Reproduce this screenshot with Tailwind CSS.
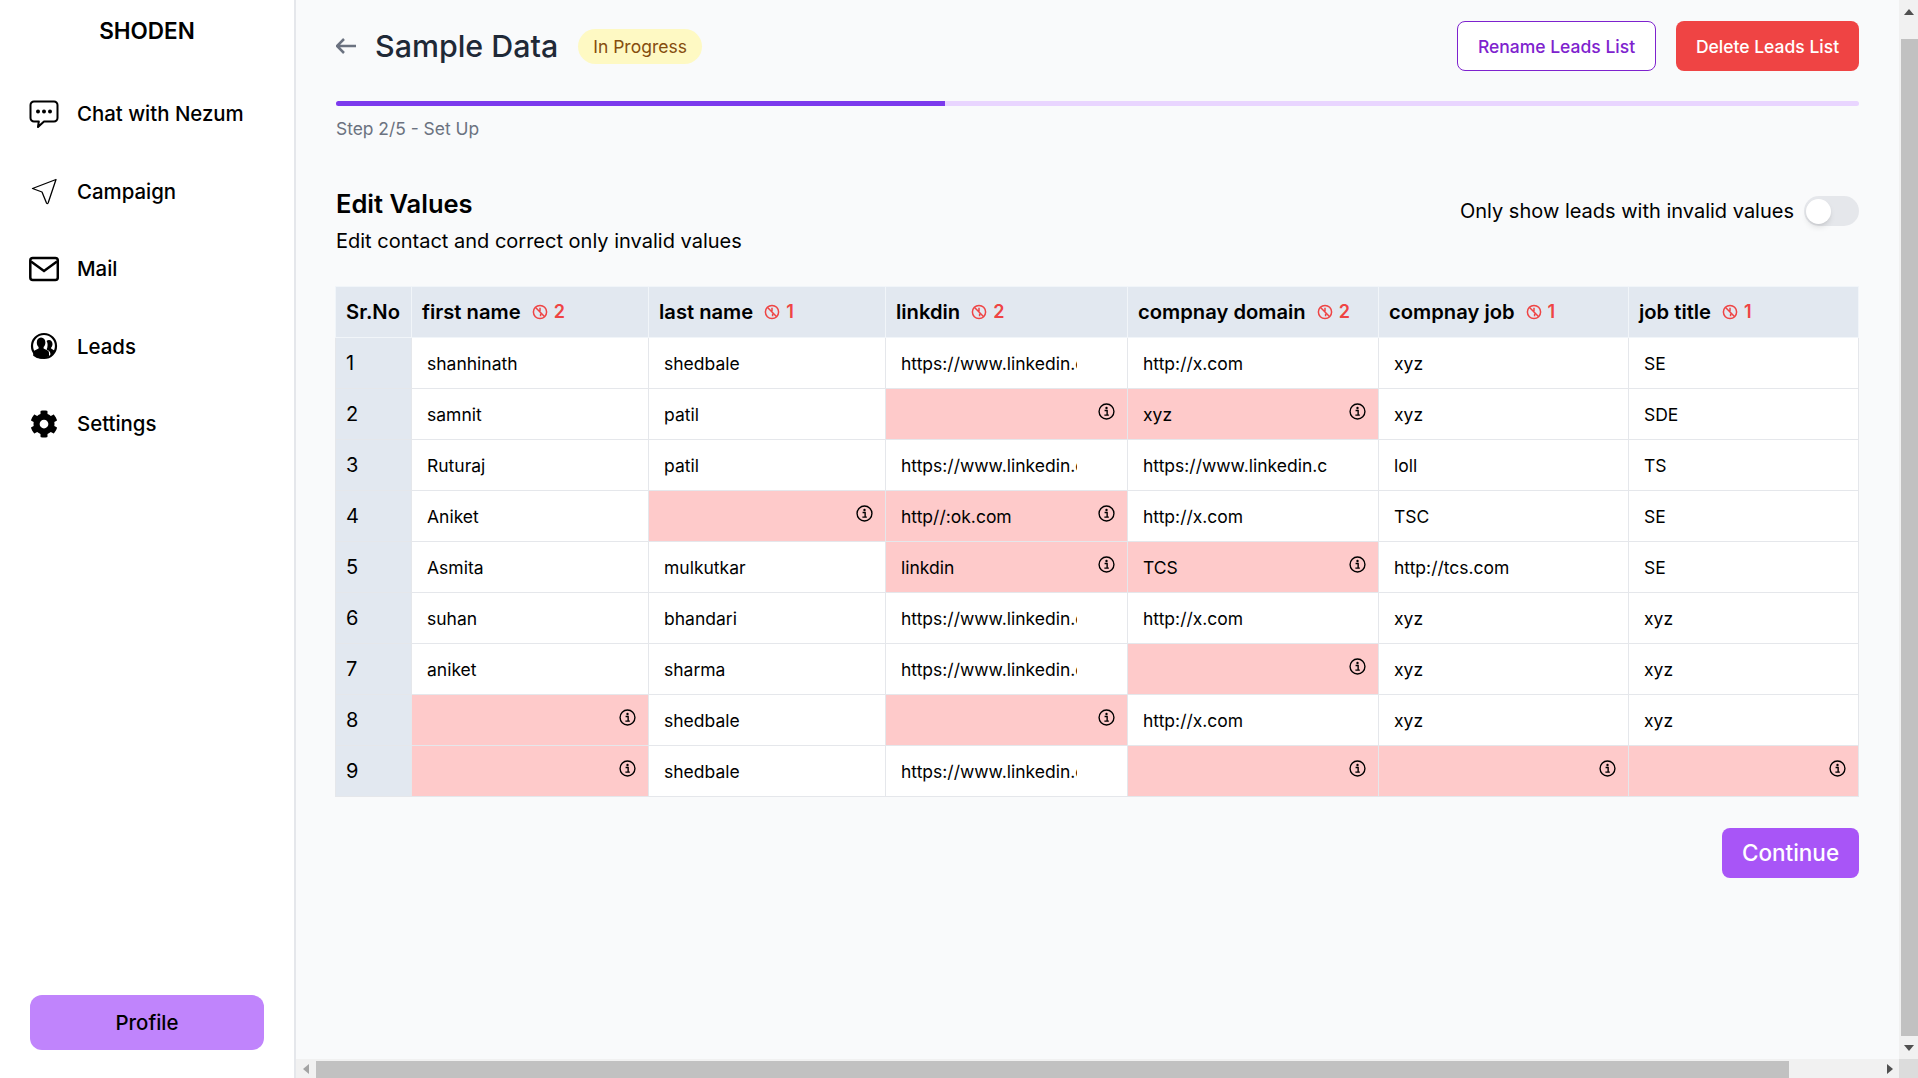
<!DOCTYPE html>
<html lang="en">
<head>
    <meta charset="UTF-8">
    <meta name="viewport" content="width=device-width, initial-scale=1.0">
    <title>Sample Data</title>
    <script src="https://cdn.jsdelivr.net/npm/@tailwindcss/browser@4"></script>
</head>
<body class="h-screen overflow-hidden font-['Inter',sans-serif] text-black bg-white">
    <!-- shared icons -->
    <svg class="hidden">
        <symbol id="info" viewBox="0 0 16 16">
            <circle cx="8" cy="8" r="7" fill="none" stroke="currentColor" stroke-width="1.3"></circle>
            <circle cx="8" cy="4.7" r="1.1" fill="currentColor"></circle>
            <path d="M6.2 7.100h2.400v4.200M6 11.400h4.200" fill="none" stroke="currentColor" stroke-width="1.3"></path>
        </symbol>
        <symbol id="ban" viewBox="0 0 16 16">
            <circle cx="8" cy="8" r="6.600" fill="none" stroke="currentColor" stroke-width="1.500"></circle>
            <path d="M3.300 3.300l9.400 9.400M8 3.800v3.400M8.600 9.800v2.400" fill="none" stroke="currentColor" stroke-width="1.500"></path>
        </symbol>
    </svg>

    <div class="flex h-full">
        <!-- sidebar -->
        <aside class="flex flex-col w-[296px] shrink-0 border-r-2 border-[#e5e7eb] bg-white">
            <div class="h-[62px] flex items-center justify-center text-[22.5px] font-semibold">SHODEN</div>
            <nav class="mt-[13px] text-[20.4px] font-medium">
                <a href="#" class="flex items-center h-[77.5px] pl-[29px] gap-[18px]">
                    <svg class="w-[30px] h-[28px]" viewBox="0 0 30 28" fill="none">
                        <path d="M5 1.500h20a3.500 3.500 0 0 1 3.500 3.500v13a3.500 3.500 0 0 1-3.500 3.500H15l-6 5.500 .8-5.500H5a3.500 3.500 0 0 1-3.500-3.500V5A3.500 3.500 0 0 1 5 1.500z" stroke="#000" stroke-width="2" stroke-linejoin="round"></path>
                        <circle cx="9" cy="11.500" r="2" fill="#000"></circle>
                        <circle cx="15" cy="11.500" r="2" fill="#000"></circle>
                        <circle cx="21" cy="11.500" r="2" fill="#000"></circle>
                    </svg>
                    <span class="pt-[2px]">Chat with Nezum</span>
                </a>
                <a href="#" class="flex items-center h-[77.5px] pl-[29px] gap-[18px]">
                    <svg class="w-[30px] h-[28px]" viewBox="0 0 30 28" fill="none">
                        <path d="M27 2.500L3.500 11.500l9.500 3.500 4.500 11c.6 1 1.300 .8 1.700 -.2z" stroke="#000" stroke-width="1.300" stroke-linejoin="round"></path>
                    </svg>
                    <span class="pt-[2px]">Campaign</span>
                </a>
                <a href="#" class="flex items-center h-[77.5px] pl-[29px] gap-[18px]">
                    <svg class="w-[30px] h-[28px]" viewBox="0 0 30 28" fill="none">
                        <rect x="1.300" y="3" width="27.500" height="22" rx="2.500" stroke="#000" stroke-width="2.500"></rect>
                        <path d="M2 6.500l13 9.500 13-9.500" stroke="#000" stroke-width="2.500"></path>
                    </svg>
                    <span class="pt-[2px]">Mail</span>
                </a>
                <a href="#" class="flex items-center h-[77.5px] pl-[29px] gap-[18px]">
                    <svg class="w-[30px] h-[28px]" viewBox="0 0 30 28">
                        <circle cx="15" cy="14" r="12" fill="#fff" stroke="#000" stroke-width="2.200"></circle>
                        <path d="M12 5.500c2.800 0 4.400 2.200 4.400 5 0 2-.8 3.600-1.800 4.600v1.400l4 2c1 .6 1.400 1.500 1.400 2.700v2.800a12 12 0 0 1-15.800-.2v-2.600c0-1.200.4-2.100 1.400-2.700l4-2v-1.400c-1-1-1.800-2.600-1.800-4.600 0-2.800 1.600-5 4.200-5z" fill="#000"></path>
                        <path d="M20 8c2.200 0 3.500 1.800 3.500 4 0 1.600-.6 2.800-1.400 3.600v1l2.800 1.600c.6 .4 1 1 1 1.800a12 12 0 0 1-4.500 4.500v-2.500c0-1.600-.7-2.800-2-3.600l-1.800-1c.6-1.200 1-2.700 1-4.400 0-1.600-.4-3-1.100-4A3.600 3.600 0 0 1 20 8z" fill="#000"></path>
                    </svg>
                    <span class="pt-[2px]">Leads</span>
                </a>
                <a href="#" class="flex items-center h-[77.5px] pl-[29px] gap-[18px]">
                    <svg class="w-[30px] h-[28px]" viewBox="0 0 512 512">
                        <path fill="#000" d="M487.4 315.7l-42.6-24.6c4.300-23.200 4.300-47 0-70.200l42.600-24.600c4.900-2.800 7.100-8.600 5.500-14-11.100-35.600-30-67.800-54.700-94.600-3.800-4.100-10-5.100-14.800-2.300L380.800 110c-17.900-15.400-38.500-27.300-60.800-35.100V25.800c0-5.600-3.900-10.500-9.400-11.700-36.700-8.200-74.300-7.800-109.200 0-5.500 1.200-9.400 6.100-9.400 11.700V75c-22.200 7.900-42.800 19.800-60.800 35.100L88.700 85.500c-4.900-2.800-11-1.900-14.800 2.300-24.700 26.700-43.600 58.900-54.700 94.600-1.700 5.400.6 11.200 5.500 14L67.300 221c-4.300 23.200-4.300 47 0 70.200l-42.600 24.600c-4.900 2.800-7.100 8.600-5.500 14 11.100 35.600 30 67.800 54.700 94.600 3.800 4.100 10 5.100 14.800 2.300l42.600-24.600c17.900 15.400 38.500 27.300 60.800 35.100v49.200c0 5.600 3.900 10.500 9.400 11.700 36.700 8.200 74.300 7.800 109.200 0 5.500-1.200 9.400-6.100 9.400-11.700v-49.200c22.200-7.900 42.800-19.800 60.800-35.100l42.600 24.600c4.900 2.800 11 1.900 14.800-2.300 24.700-26.700 43.600-58.900 54.700-94.600 1.500-5.500-.7-11.300-5.600-14.100zM256 336c-44.100 0-80-35.900-80-80s35.900-80 80-80 80 35.900 80 80-35.900 80-80 80z"></path>
                    </svg>
                    <span class="pt-[2px]">Settings</span>
                </a>
            </nav>
            <button class="mt-auto mb-[28px] mx-[30px] h-[55px] pt-[2px] rounded-xl bg-[#c084fc] text-[20.4px] font-medium">Profile</button>
        </aside>

        <div class="flex-1 min-w-0 flex flex-col">
            <div class="flex-1 min-h-0 flex">
                <!-- main content -->
                <main class="flex-1 min-w-0 bg-[#f9fafb] pt-[21px] px-[40px]">
                    <div class="flex items-center h-[50px]">
                        <svg class="w-[22px] h-[18px] text-[#6b7280]" viewBox="0 0 22 18" fill="none" stroke="currentColor" stroke-width="2.500">
                            <path d="M20 9H1M8 2L1 9l7 7"></path>
                        </svg>
                        <h1 class="ml-[17px] pt-[2px] text-[30.4px] font-medium text-[#1f2937]">Sample Data</h1>
                        <span class="ml-[20px] h-[35px] px-[15px] pt-[2px] flex items-center rounded-full bg-[#fef9c3] text-[#854d0e] text-[17.5px]">In Progress</span>
                        <button class="ml-auto h-[50px] w-[199px] pt-[2px] rounded-lg border border-[#7e22ce] bg-white text-[#7e22ce] text-[17.5px] font-medium">Rename Leads List</button>
                        <button class="ml-[20px] h-[50px] w-[183px] pt-[2px] rounded-lg bg-[#ef4444] text-white text-[17.5px] font-medium">Delete Leads List</button>
                    </div>

                    <div class="mt-[30px] h-[5px] rounded-full bg-[#e9d5ff] overflow-hidden">
                        <div class="h-full w-[40%] bg-[#7c3aed]"></div>
                    </div>
                    <p class="mt-[9px] h-7 leading-7 text-[17.4px] text-[#6b7280]">Step 2/5 - Set Up</p>

                    <div class="mt-[45px] flex justify-between items-start">
                        <div>
                            <h2 class="h-8 leading-8 text-[25.5px] font-semibold">Edit Values</h2>
                            <p class="mt-[7px] h-7 leading-7 text-[20px]">Edit contact and correct only invalid values</p>
                        </div>
                        <label class="pt-[8px] flex items-center gap-[10px] text-[20px]">
                            <span>Only show leads with invalid values</span>
                            <span class="relative w-[55px] h-[30px] rounded-full bg-[#e5e7eb]">
                                <span class="absolute left-[2px] top-[3px] w-[25px] h-[25px] rounded-full bg-white shadow-md"></span>
                            </span>
                        </label>
                    </div>

                    <table class="mt-[31px] -ml-px w-full table-fixed border-collapse text-[17.5px]">
                        <colgroup>
                            <col class="w-[76px]"><col class="w-[237px]"><col class="w-[237px]"><col class="w-[242px]"><col class="w-[251px]"><col class="w-[250px]"><col class="w-[230px]">
                        </colgroup>
                        <thead>
                            <tr class="h-[51px] bg-[#e2e8f0] text-[20.2px] font-semibold text-left">
                                <th class="border border-[#f1f5f9] px-[10px] font-semibold">Sr.No</th>
                                <th class="border border-[#f1f5f9] px-[10px] font-semibold"><span class="flex items-center">first name<svg class="ml-[11px] w-4 h-4 text-[#ef4444]"><use href="#ban"></use></svg><span class="ml-[6px] text-[18px] font-semibold text-[#ef4444]">2</span></span></th>
                                <th class="border border-[#f1f5f9] px-[10px] font-semibold"><span class="flex items-center">last name<svg class="ml-[11px] w-4 h-4 text-[#ef4444]"><use href="#ban"></use></svg><span class="ml-[6px] text-[18px] font-semibold text-[#ef4444]">1</span></span></th>
                                <th class="border border-[#f1f5f9] px-[10px] font-semibold"><span class="flex items-center">linkdin<svg class="ml-[11px] w-4 h-4 text-[#ef4444]"><use href="#ban"></use></svg><span class="ml-[6px] text-[18px] font-semibold text-[#ef4444]">2</span></span></th>
                                <th class="border border-[#f1f5f9] px-[10px] font-semibold"><span class="flex items-center">compnay domain<svg class="ml-[11px] w-4 h-4 text-[#ef4444]"><use href="#ban"></use></svg><span class="ml-[6px] text-[18px] font-semibold text-[#ef4444]">2</span></span></th>
                                <th class="border border-[#f1f5f9] px-[10px] font-semibold"><span class="flex items-center">compnay job<svg class="ml-[11px] w-4 h-4 text-[#ef4444]"><use href="#ban"></use></svg><span class="ml-[6px] text-[18px] font-semibold text-[#ef4444]">1</span></span></th>
                                <th class="border border-[#f1f5f9] px-[10px] font-semibold"><span class="flex items-center">job title<svg class="ml-[11px] w-4 h-4 text-[#ef4444]"><use href="#ban"></use></svg><span class="ml-[6px] text-[18px] font-semibold text-[#ef4444]">1</span></span></th>
                            </tr>
                        </thead>
                        <tbody class="[&_td:not(:first-child)]:pt-[2px]">
                            <tr class="h-[51px] bg-white">
                                <td class="border border-[#e5e7eb] bg-[#e2e8f0] px-[10px] text-[20px]">1</td>
                                <td class="border border-[#e5e7eb] pl-[15px]">shanhinath</td>
                                <td class="border border-[#e5e7eb] pl-[15px]">shedbale</td>
                                <td class="border border-[#e5e7eb] pl-[15px]"><div class="overflow-hidden whitespace-nowrap w-[176px]">https://www.linkedin.c</div></td>
                                <td class="border border-[#e5e7eb] pl-[15px]">http://x.com</td>
                                <td class="border border-[#e5e7eb] pl-[15px]">xyz</td>
                                <td class="border border-[#e5e7eb] pl-[15px]">SE</td>
                            </tr>
                            <tr class="h-[51px] bg-white">
                                <td class="border border-[#e5e7eb] bg-[#e2e8f0] px-[10px] text-[20px]">2</td>
                                <td class="border border-[#e5e7eb] pl-[15px]">samnit</td>
                                <td class="border border-[#e5e7eb] pl-[15px]">patil</td>
                                <td class="relative border border-[#e5e7eb] pl-[15px] bg-[#fecaca]"><svg class="absolute right-[12px] top-[14px] w-[17px] h-[17px]"><use href="#info"></use></svg></td>
                                <td class="relative border border-[#e5e7eb] pl-[15px] bg-[#fecaca]">xyz<svg class="absolute right-[12px] top-[14px] w-[17px] h-[17px]"><use href="#info"></use></svg></td>
                                <td class="border border-[#e5e7eb] pl-[15px]">xyz</td>
                                <td class="border border-[#e5e7eb] pl-[15px]">SDE</td>
                            </tr>
                            <tr class="h-[51px] bg-white">
                                <td class="border border-[#e5e7eb] bg-[#e2e8f0] px-[10px] text-[20px]">3</td>
                                <td class="border border-[#e5e7eb] pl-[15px]">Ruturaj</td>
                                <td class="border border-[#e5e7eb] pl-[15px]">patil</td>
                                <td class="border border-[#e5e7eb] pl-[15px]"><div class="overflow-hidden whitespace-nowrap w-[176px]">https://www.linkedin.c</div></td>
                                <td class="border border-[#e5e7eb] pl-[15px]"><div class="overflow-hidden whitespace-nowrap w-[185px]">https://www.linkedin.c</div></td>
                                <td class="border border-[#e5e7eb] pl-[15px]">loll</td>
                                <td class="border border-[#e5e7eb] pl-[15px]">TS</td>
                            </tr>
                            <tr class="h-[51px] bg-white">
                                <td class="border border-[#e5e7eb] bg-[#e2e8f0] px-[10px] text-[20px]">4</td>
                                <td class="border border-[#e5e7eb] pl-[15px]">Aniket</td>
                                <td class="relative border border-[#e5e7eb] pl-[15px] bg-[#fecaca]"><svg class="absolute right-[12px] top-[14px] w-[17px] h-[17px]"><use href="#info"></use></svg></td>
                                <td class="relative border border-[#e5e7eb] pl-[15px] bg-[#fecaca]">http//:ok.com<svg class="absolute right-[12px] top-[14px] w-[17px] h-[17px]"><use href="#info"></use></svg></td>
                                <td class="border border-[#e5e7eb] pl-[15px]">http://x.com</td>
                                <td class="border border-[#e5e7eb] pl-[15px]">TSC</td>
                                <td class="border border-[#e5e7eb] pl-[15px]">SE</td>
                            </tr>
                            <tr class="h-[51px] bg-white">
                                <td class="border border-[#e5e7eb] bg-[#e2e8f0] px-[10px] text-[20px]">5</td>
                                <td class="border border-[#e5e7eb] pl-[15px]">Asmita</td>
                                <td class="border border-[#e5e7eb] pl-[15px]">mulkutkar</td>
                                <td class="relative border border-[#e5e7eb] pl-[15px] bg-[#fecaca]">linkdin<svg class="absolute right-[12px] top-[14px] w-[17px] h-[17px]"><use href="#info"></use></svg></td>
                                <td class="relative border border-[#e5e7eb] pl-[15px] bg-[#fecaca]">TCS<svg class="absolute right-[12px] top-[14px] w-[17px] h-[17px]"><use href="#info"></use></svg></td>
                                <td class="border border-[#e5e7eb] pl-[15px]">http://tcs.com</td>
                                <td class="border border-[#e5e7eb] pl-[15px]">SE</td>
                            </tr>
                            <tr class="h-[51px] bg-white">
                                <td class="border border-[#e5e7eb] bg-[#e2e8f0] px-[10px] text-[20px]">6</td>
                                <td class="border border-[#e5e7eb] pl-[15px]">suhan</td>
                                <td class="border border-[#e5e7eb] pl-[15px]">bhandari</td>
                                <td class="border border-[#e5e7eb] pl-[15px]"><div class="overflow-hidden whitespace-nowrap w-[176px]">https://www.linkedin.c</div></td>
                                <td class="border border-[#e5e7eb] pl-[15px]">http://x.com</td>
                                <td class="border border-[#e5e7eb] pl-[15px]">xyz</td>
                                <td class="border border-[#e5e7eb] pl-[15px]">xyz</td>
                            </tr>
                            <tr class="h-[51px] bg-white">
                                <td class="border border-[#e5e7eb] bg-[#e2e8f0] px-[10px] text-[20px]">7</td>
                                <td class="border border-[#e5e7eb] pl-[15px]">aniket</td>
                                <td class="border border-[#e5e7eb] pl-[15px]">sharma</td>
                                <td class="border border-[#e5e7eb] pl-[15px]"><div class="overflow-hidden whitespace-nowrap w-[176px]">https://www.linkedin.c</div></td>
                                <td class="relative border border-[#e5e7eb] pl-[15px] bg-[#fecaca]"><svg class="absolute right-[12px] top-[14px] w-[17px] h-[17px]"><use href="#info"></use></svg></td>
                                <td class="border border-[#e5e7eb] pl-[15px]">xyz</td>
                                <td class="border border-[#e5e7eb] pl-[15px]">xyz</td>
                            </tr>
                            <tr class="h-[51px] bg-white">
                                <td class="border border-[#e5e7eb] bg-[#e2e8f0] px-[10px] text-[20px]">8</td>
                                <td class="relative border border-[#e5e7eb] pl-[15px] bg-[#fecaca]"><svg class="absolute right-[12px] top-[14px] w-[17px] h-[17px]"><use href="#info"></use></svg></td>
                                <td class="border border-[#e5e7eb] pl-[15px]">shedbale</td>
                                <td class="relative border border-[#e5e7eb] pl-[15px] bg-[#fecaca]"><svg class="absolute right-[12px] top-[14px] w-[17px] h-[17px]"><use href="#info"></use></svg></td>
                                <td class="border border-[#e5e7eb] pl-[15px]">http://x.com</td>
                                <td class="border border-[#e5e7eb] pl-[15px]">xyz</td>
                                <td class="border border-[#e5e7eb] pl-[15px]">xyz</td>
                            </tr>
                            <tr class="h-[51px] bg-white">
                                <td class="border border-[#e5e7eb] bg-[#e2e8f0] px-[10px] text-[20px]">9</td>
                                <td class="relative border border-[#e5e7eb] pl-[15px] bg-[#fecaca]"><svg class="absolute right-[12px] top-[14px] w-[17px] h-[17px]"><use href="#info"></use></svg></td>
                                <td class="border border-[#e5e7eb] pl-[15px]">shedbale</td>
                                <td class="border border-[#e5e7eb] pl-[15px]"><div class="overflow-hidden whitespace-nowrap w-[176px]">https://www.linkedin.c</div></td>
                                <td class="relative border border-[#e5e7eb] pl-[15px] bg-[#fecaca]"><svg class="absolute right-[12px] top-[14px] w-[17px] h-[17px]"><use href="#info"></use></svg></td>
                                <td class="relative border border-[#e5e7eb] pl-[15px] bg-[#fecaca]"><svg class="absolute right-[12px] top-[14px] w-[17px] h-[17px]"><use href="#info"></use></svg></td>
                                <td class="relative border border-[#e5e7eb] pl-[15px] bg-[#fecaca]"><svg class="absolute right-[12px] top-[14px] w-[17px] h-[17px]"><use href="#info"></use></svg></td>
                            </tr>
                        </tbody>
                    </table>

                    <div class="mt-[31px] flex justify-end">
                        <button class="w-[137px] h-[50px] rounded-lg bg-[#a855f7] text-white text-[22.5px] font-medium">Continue</button>
                    </div>
                </main>

                <!-- vertical scrollbar -->
                <div class="w-[19px] shrink-0 flex flex-col bg-[#f1f1f1]">
                    <div class="h-[39px] flex items-start justify-center pt-[9px]">
                        <svg class="w-[10px] h-[6px]" viewBox="0 0 10 6"><path d="M5 0l5 6H0z" fill="#505050"></path></svg>
                    </div>
                    <div class="flex-1 ml-[2px] bg-[#c1c1c1]"></div>
                    <div class="h-[23px] flex items-center justify-center">
                        <svg class="w-[10px] h-[6px]" viewBox="0 0 10 6"><path d="M0 0h10L5 6z" fill="#505050"></path></svg>
                    </div>
                </div>
            </div>

            <!-- horizontal scrollbar -->
            <div class="h-[19px] shrink-0 flex bg-[#f1f1f1]">
                <div class="w-[20px] flex items-center justify-center">
                    <svg class="w-[6px] h-[10px]" viewBox="0 0 6 10"><path d="M6 0v10L0 5z" fill="#a3a3a3"></path></svg>
                </div>
                <div class="w-[1473px] mt-[2px] bg-[#c1c1c1]"></div>
                <div class="flex-1 flex items-center justify-end pr-[6px]">
                    <svg class="w-[6px] h-[10px]" viewBox="0 0 6 10"><path d="M0 0l6 5-6 5z" fill="#505050"></path></svg>
                </div>
                <div class="w-[19px] bg-[#dcdcdc]"></div>
            </div>
        </div>
    </div>
</body>
</html>
